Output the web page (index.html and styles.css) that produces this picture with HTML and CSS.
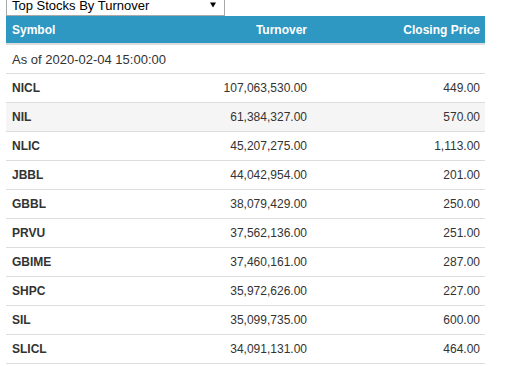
FILE: index.html
```html
<!DOCTYPE html>
<html>
<head>
<meta charset="utf-8">
<link rel="stylesheet" href="styles.css">
</head>
<body>
<div class="frame">
  <div class="picker">
    <span class="picker-label">Top Stocks By Turnover</span>
    <svg class="picker-arrow" width="6" height="6" viewBox="0 0 6 6"><polygon points="0,0.5 6,0.5 3,5.5" fill="#000"/></svg>
  </div>
  <table class="stocks">
    <colgroup><col class="c-sym"><col class="c-turn"><col class="c-price"></colgroup>
    <thead>
      <tr><th class="sym">Symbol</th><th class="num">Turnover</th><th class="num">Closing Price</th></tr>
    </thead>
    <tbody>
      <tr class="asof"><td colspan="3">As of 2020-02-04 15:00:00</td></tr>
      <tr><td class="sym">NICL</td><td class="num">107,063,530.00</td><td class="num">449.00</td></tr>
      <tr class="hover"><td class="sym">NIL</td><td class="num">61,384,327.00</td><td class="num">570.00</td></tr>
      <tr><td class="sym">NLIC</td><td class="num">45,207,275.00</td><td class="num">1,113.00</td></tr>
      <tr><td class="sym">JBBL</td><td class="num">44,042,954.00</td><td class="num">201.00</td></tr>
      <tr><td class="sym">GBBL</td><td class="num">38,079,429.00</td><td class="num">250.00</td></tr>
      <tr><td class="sym">PRVU</td><td class="num">37,562,136.00</td><td class="num">251.00</td></tr>
      <tr><td class="sym">GBIME</td><td class="num">37,460,161.00</td><td class="num">287.00</td></tr>
      <tr><td class="sym">SHPC</td><td class="num">35,972,626.00</td><td class="num">227.00</td></tr>
      <tr><td class="sym">SIL</td><td class="num">35,099,735.00</td><td class="num">600.00</td></tr>
      <tr><td class="sym">SLICL</td><td class="num">34,091,131.00</td><td class="num">464.00</td></tr>
    </tbody>
  </table>
</div>
</body>
</html>
```

FILE: styles.css
```css
html, body {
  margin: 0;
  padding: 0;
  background: #fff;
  overflow: hidden;
}
body {
  font-family: "Liberation Sans", Arial, sans-serif;
  color: #333;
}
.frame {
  width: 506px;
  height: 366px;
  border-right: 1px solid #dcdcdc;
  padding-left: 6px;
  box-sizing: content-box;
  overflow: hidden;
}
.picker {
  width: 219px;
  height: 16px;
  border: 1px solid #a9a9a9;
  border-top: 0;
  background: #fff;
  display: flex;
  align-items: flex-start;
  justify-content: space-between;
  padding: 0 8px 0 5px;
  box-sizing: border-box;
  font-size: 13px;
  line-height: 12px;
  color: #000;
}
.picker-arrow { display: block; margin-top: 2px; }
.stocks {
  width: 479px;
  table-layout: fixed;
  border-collapse: collapse;
  border-spacing: 0;
}
.c-sym { width: 154px; }
.c-turn { width: 152px; }
.c-price { width: 173px; }
.stocks th {
  background: #2e97c2;
  color: #fff;
  font-weight: bold;
  font-size: 12px;
  height: 27px;
  padding: 0 5px 0 6px;
  border-bottom: 2px solid #dddddd;
  text-align: left;
}
.stocks td {
  height: 28px;
  padding: 0 5px 0 6px;
  border-bottom: 1px solid #dddddd;
  font-size: 12px;
  color: #333;
}
.stocks .num { text-align: right; }
.stocks td.sym { font-weight: bold; }
.stocks .asof td {
  height: 28px;
  font-size: 13px;
}
.stocks tr.hover td { background: #f5f5f5; }
```
